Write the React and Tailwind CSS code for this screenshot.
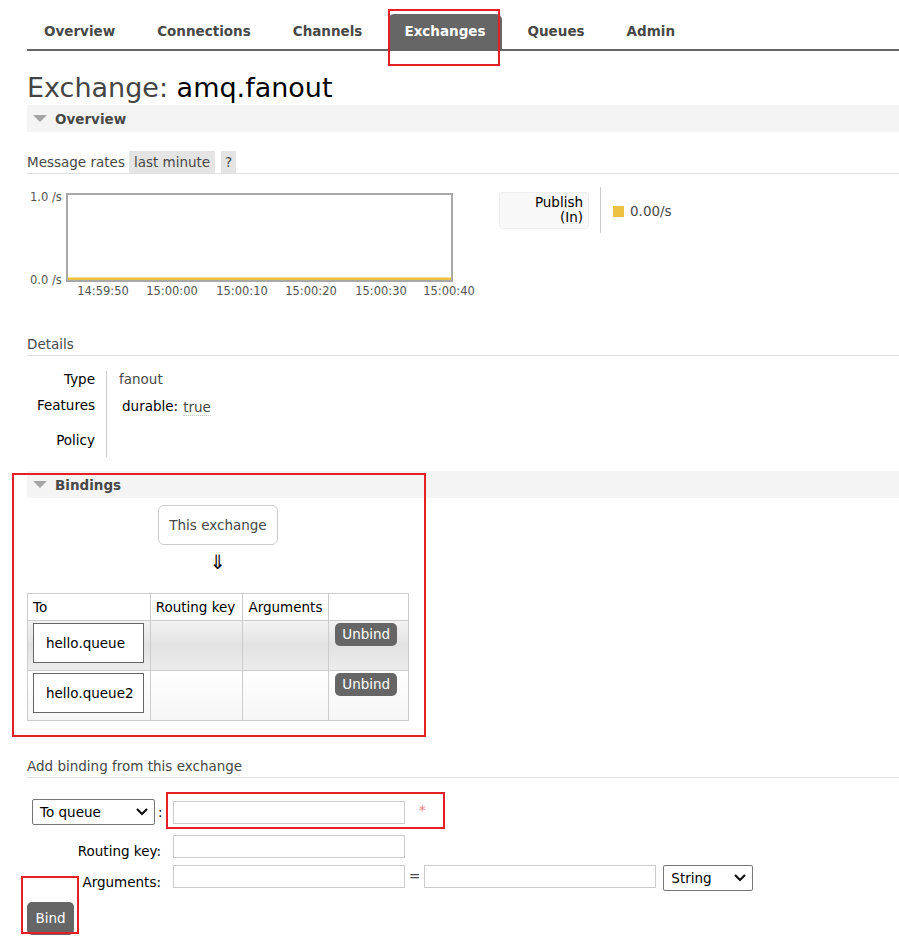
import React from 'react';

const tabs = ['Overview', 'Connections', 'Channels', 'Exchanges', 'Queues', 'Admin'];
const times = [
  { x: 76, t: '14:59:50' },
  { x: 145, t: '15:00:00' },
  { x: 215, t: '15:00:10' },
  { x: 284, t: '15:00:20' },
  { x: 354, t: '15:00:30' },
  { x: 422, t: '15:00:40' },
];

function SectionHeader({ title }) {
  return (
    <div className="h-[27px] bg-[#f4f4f4] flex items-center">
      <svg width="14" height="8" viewBox="0 0 14 8" className="ml-[6px] mr-[8px]">
        <path d="M0 0 L14 0 L7 7 Z" fill="#a5a5a5" />
      </svg>
      <span className="font-bold text-[13.5px] text-[#484848] mt-[1px]">{title}</span>
    </div>
  );
}

function SubHeader({ children }) {
  return (
    <div className="border-b border-[#e0e0e0] h-[21px] flex items-end pb-[1px] text-[13.5px] text-[#484848]">
      {children}
    </div>
  );
}

function Chevron() {
  return (
    <svg
      width="14"
      height="10"
      viewBox="0 0 14 10"
      className="absolute right-[6px] top-1/2 -translate-y-1/2 pointer-events-none"
    >
      <path d="M2 2 L7 7 L12 2" fill="none" stroke="#111" strokeWidth="2.2" />
    </svg>
  );
}

function Select({ label, w }) {
  return (
    <div className={`relative h-[26px] ${w}`}>
      <div className="h-full w-full border border-[#767676] rounded-[2px] bg-white flex items-center pl-[7px] text-[13.5px] text-black">
        {label}
      </div>
      <Chevron />
    </div>
  );
}

function Field({ w = 'w-[232px]' }) {
  return <div className={`h-[23px] ${w} border border-[#ccc] bg-white`} />;
}

function RedBox({ className }) {
  return <div className={`absolute border-2 border-[#e51f27] pointer-events-none ${className}`} />;
}

function BindingRow({ name, shade }) {
  return (
    <div className={`flex h-[50px] border-t border-[#ccc] ${shade}`}>
      <div className="w-[123px] border-r border-[#ccc] pl-[5px] pt-[2px]">
        <div className="w-[111px] h-[40px] border border-[#666] bg-white flex items-center pl-[12px] text-[13.5px] text-black">
          {name}
        </div>
      </div>
      <div className="w-[93px] border-r border-[#ccc]" />
      <div className="w-[86px] border-r border-[#ccc]" />
      <div className="w-[79px] pl-[6px] pt-[2px]">
        <div className="w-[62px] h-[23px] rounded-[5px] bg-[#666] text-white text-[13.5px] flex items-center justify-center">
          Unbind
        </div>
      </div>
    </div>
  );
}

export default function App() {
  return (
    <div
      className="relative w-[899px] h-[942px] bg-white text-[#333] overflow-hidden"
      style={{ fontFamily: '"DejaVu Sans", Verdana, sans-serif' }}
    >
      <div className="pl-[27px]">
        {/* Nav */}
        <div className="pt-[14px] flex border-b-2 border-[#666] gap-[10px]">
          {tabs.map((t, i) => (
            <div
              key={t}
              className={`h-[35px] flex items-center px-[16px] text-[13.5px] font-bold ${
                i === 0 ? 'ml-px' : ''
              } ${
                t === 'Exchanges'
                  ? 'bg-[#666] text-white rounded-t-[6px]'
                  : 'text-[#484848]'
              }`}
            >
              {t}
            </div>
          ))}
        </div>

        {/* Title */}
        <div className="mt-[20px] h-[34px] leading-[34px] text-[27px] text-[#444]">
          Exchange: <span className="text-black">amq.fanout</span>
        </div>

        <SectionHeader title="Overview" />

        {/* Message rates */}
        <div className="mt-[19px] border-b border-[#e0e0e0] flex items-end text-[13.5px] text-[#484848]">
          <span className="mr-[4px] pb-[1px]">Message rates</span>
          <span className="h-[22px] px-[5px] bg-[#e4e4e4] flex items-center mr-[6px]">last minute</span>
          <span className="h-[22px] w-[15px] bg-[#e4e4e4] flex items-center justify-center">?</span>
        </div>

        {/* Chart + legend */}
        <div className="mt-[12px] flex">
          <svg width="455" height="112" className="shrink-0">
            <rect x="40" y="8" width="385" height="87" fill="#fff" stroke="#a8a8a8" strokeWidth="2" />
            <rect x="41" y="91.5" width="383" height="2.5" fill="#edc240" />
            <text x="3" y="15" fontSize="11.5" fill="#545454" fontFamily="DejaVu Sans, sans-serif">1.0 /s</text>
            <text x="3" y="98" fontSize="11.5" fill="#545454" fontFamily="DejaVu Sans, sans-serif">0.0 /s</text>
            {times.map((d) => (
              <text
                key={d.t}
                x={d.x}
                y="109"
                textAnchor="middle"
                fontSize="11.5"
                fill="#545454"
                fontFamily="DejaVu Sans, sans-serif"
              >
                {d.t}
              </text>
            ))}
          </svg>
          <div className="ml-[17px] mt-[1px] flex h-[46px]">
            <div className="mt-[5px] w-[90px] h-[37px] rounded-[3px] border border-[#eee] bg-[#f8f8f8] text-right pr-[5px] text-[13.5px] leading-[15px] pt-[2px] text-black">
              Publish
              <br />
              (In)
            </div>
            <div className="ml-[11px] border-l border-[#ccc] h-full" />
            <div className="ml-[12px] mt-[19px] flex items-start">
              <span className="w-[11px] h-[11px] bg-[#edc240] mr-[6px]" />
              <span className="text-[13.5px] text-[#484848] leading-[11px]">0.00/s</span>
            </div>
          </div>
        </div>

        {/* Details */}
        <div className="mt-[37px]">
          <SubHeader>Details</SubHeader>
        </div>
        <div className="mt-[12px] flex text-[13.5px] text-black">
          <div className="w-[80px] flex flex-col items-end pr-[11px] border-r border-[#ccc] mt-[3px]">
            <div className="h-[16px] flex items-center">Type</div>
            <div className="h-[36px] flex items-center">Features</div>
            <div className="h-[34px] flex items-center">Policy</div>
          </div>
          <div className="flex flex-col pl-[12px] text-[#484848]">
            <div className="h-[20px] flex items-center mt-[1px]">fanout</div>
            <div className="h-[34px] flex items-center pl-[3px] text-black">
              durable:
              <span className="ml-[5px] mt-[3px] text-[#484848] border-b border-dotted border-[#ccc] leading-[15px]">true</span>
            </div>
          </div>
        </div>

        {/* Bindings */}
        <div className="mt-[14px]">
          <SectionHeader title="Bindings" />
        </div>
        <div className="w-[382px] flex flex-col items-center">
          <div className="mt-[7px] w-[120px] h-[40px] rounded-[6px] border border-[#ccc] flex items-center justify-center text-[13.5px] text-[#484848]">
            This exchange
          </div>
          <div className="mt-[7px] h-[20px] leading-[20px] text-[20px] text-black">⇓</div>
        </div>
        <div className="mt-[21px] w-[382px] border border-[#ccc] text-[13.5px] text-black">
          <div className="flex h-[26px] items-center">
            <div className="w-[123px] h-full border-r border-[#ccc] flex items-center pl-[5px]">To</div>
            <div className="w-[93px] h-full border-r border-[#ccc] flex items-center pl-[5px]">Routing key</div>
            <div className="w-[86px] h-full border-r border-[#ccc] flex items-center pl-[5px]">Arguments</div>
            <div className="w-[79px]" />
          </div>
          <BindingRow name="hello.queue" shade="bg-linear-to-b from-[#f3f3f3] via-[#e2e2e2] to-[#ececec]" />
          <BindingRow name="hello.queue2" shade="bg-linear-to-b from-[#ffffff] to-[#f6f6f6]" />
        </div>

        {/* Add binding */}
        <div className="mt-[36px]">
          <SubHeader>Add binding from this exchange</SubHeader>
        </div>
        <div className="mt-[21px] flex flex-col text-[13.5px] text-black">
          <div className="flex items-center h-[26px]">
            <div className="w-[136px] flex items-center pl-[5px]">
              <Select label="To queue" w="w-[123px]" />
              <span className="ml-[3px]">:</span>
            </div>
            <div className="ml-[10px]">
              <Field />
            </div>
            <span className="ml-[14px] text-[#f08080] -mt-[4px]">*</span>
          </div>
          <div className="flex items-center h-[23px] mt-[10px]">
            <div className="w-[136px] text-right pr-[2px] translate-y-[5px]">Routing key:</div>
            <div className="ml-[10px]">
              <Field />
            </div>
          </div>
          <div className="flex items-start h-[26px] mt-[7px]">
            <div className="w-[136px] text-right pr-[2px] translate-y-[7px]">Arguments:</div>
            <div className="ml-[10px] flex items-start">
              <Field />
              <span className="mx-[4px] text-[#484848] leading-[23px]">=</span>
              <Field />
              <div className="ml-[7px]">
                <Select label="String" w="w-[90px]" />
              </div>
            </div>
          </div>
        </div>
        <div className="mt-[11px] w-[47px] h-[33px] rounded-[5px] bg-[#666] text-white text-[13.5px] flex items-center justify-center">
          Bind
        </div>
      </div>

      {/* annotation boxes */}
      <RedBox className="left-[388px] top-[9px] w-[112px] h-[57px]" />
      <RedBox className="left-[12px] top-[473px] w-[414px] h-[264px]" />
      <RedBox className="left-[166px] top-[792px] w-[279px] h-[37px]" />
      <RedBox className="left-[21px] top-[876px] w-[58px] h-[58px]" />
    </div>
  );
}
